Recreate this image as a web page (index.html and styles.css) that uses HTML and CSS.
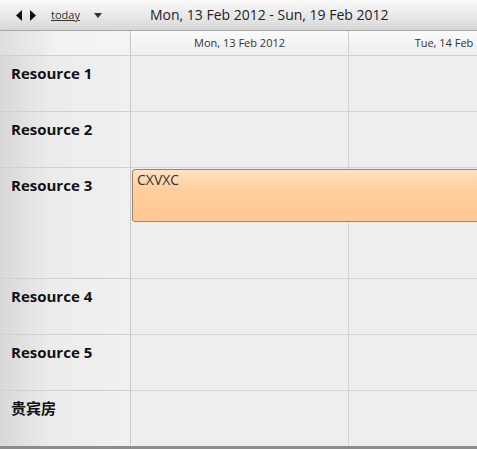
FILE: index.html
```html
<!DOCTYPE html>
<html>
<head>
<meta charset="utf-8">
<link rel="stylesheet" href="styles.css">
</head>
<body>
<div class="sched">
  <div class="toolbar">
    <div class="nav">
      <svg width="26" height="12" viewBox="0 0 26 12"><polygon points="6,0 6,11 0,5.5" fill="#111"/><polygon points="14,0 14,11 20,5.5" fill="#111"/></svg>
    </div>
    <span class="today">today</span>
    <svg class="drop" width="8" height="5" viewBox="0 0 8 5"><polygon points="0,0 8,0 4,5" fill="#333"/></svg>
    <span class="title">Mon, 13 Feb 2012 - Sun, 19 Feb 2012</span>
  </div>
  <div class="grid">
    <div class="corner"></div>
    <div class="dayhead">Mon, 13 Feb 2012</div>
    <div class="dayhead last">Tue, 14 Feb 2012</div>

    <div class="res">Resource 1</div>
    <div class="cell"></div><div class="cell last"></div>

    <div class="res">Resource 2</div>
    <div class="cell"></div><div class="cell last"></div>

    <div class="res">Resource 3</div>
    <div class="cell evcell"><div class="event">CXVXC</div></div><div class="cell last"></div>

    <div class="res">Resource 4</div>
    <div class="cell"></div><div class="cell last"></div>

    <div class="res">Resource 5</div>
    <div class="cell"></div><div class="cell last"></div>

    <div class="res">贵宾房</div>
    <div class="cell"></div><div class="cell last"></div>
  </div>
</div>
</body>
</html>
```
FILE: styles.css
```css
html, body { margin: 0; padding: 0; }
body {
  width: 477px; height: 449px; overflow: hidden;
  font-family: "Open Sans", "Noto Sans CJK SC", sans-serif;
  background: #ededed;
}
.sched { width: 477px; height: 449px; overflow: hidden; border-bottom: 3px solid #8c8c8c; box-sizing: border-box; }
.toolbar {
  height: 30px; border-bottom: 1px solid #a8a8a8;
  background: linear-gradient(#fafafa, #e6e6e6 60%, #d6d6d6);
  display: flex; align-items: center; padding-left: 16px;
}
.nav { display: flex; align-items: center; height: 12px; margin-top: 1px; }
.nav svg { display: block; }
.today {
  margin-left: 9px; font-size: 11px; color: #333; text-decoration: underline;
  line-height: 14px;
}
.drop { margin-left: 14px; margin-top: 1px; }
.title { margin-left: 48px; font-size: 14px; color: #222; line-height: 18px; }
.grid {
  display: grid;
  grid-template-columns: 131px 218px 218px;
  grid-template-rows: 25px 56px 56px 111px 56px 56px 56px;
}
.corner {
  border-right: 1px solid #c8c8c8; border-bottom: 1px solid #cfcfcf;
  background: linear-gradient(90deg, #dedede, #f2f2f2 45%, #f4f4f4);
}
.dayhead {
  border-right: 1px solid #cfcfcf; border-bottom: 1px solid #cfcfcf;
  background: linear-gradient(#fbfbfb, #eeeeee);
  font-size: 11px; color: #333; text-align: center; line-height: 24px; white-space: nowrap;
  overflow: hidden;
}
.res {
  border-right: 1px solid #c8c8c8; border-bottom: 1px solid #d0d0d0;
  background: linear-gradient(90deg, #d8d8d8, #ececec 40%, #f0f0f0);
  font-weight: bold; font-size: 15px; color: #111; padding: 7px 0 0 11px; line-height: 21px;
}
.cell { border-right: 1px solid #d4d4d4; border-bottom: 1px solid #d4d4d4; background: #eeeeee; }
.evcell { position: relative; }
.last { border-right: none; }
.event {
  position: absolute; z-index: 2; left: 1px; top: 1px; width: 360px; height: 53px;
  box-sizing: border-box; border: 1px solid #9a8468; border-radius: 3px;
  background: linear-gradient(#ffe2c2, #ffd0a0 35%, #ffc890 85%, #ffcc98);
  font-size: 14px; color: #333; padding: 0 0 0 4px; line-height: 19px;
}
```
